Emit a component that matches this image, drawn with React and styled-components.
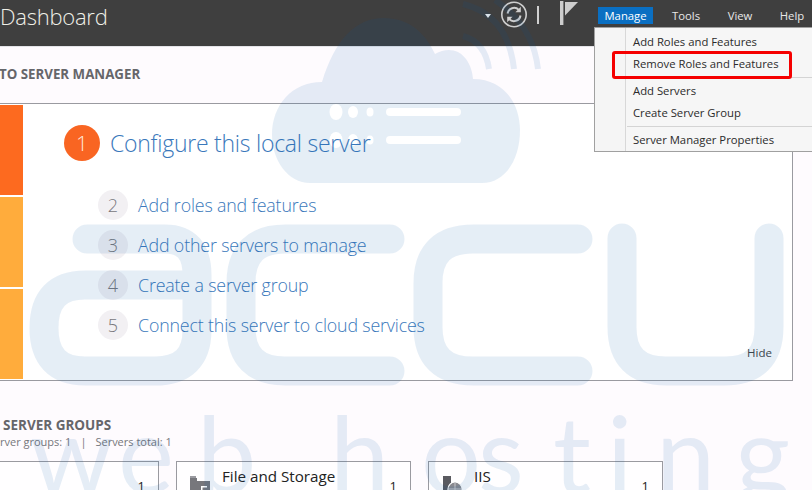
import React from "react";
import styled, { createGlobalStyle } from "styled-components";

const Global = createGlobalStyle`
  html, body { margin: 0; padding: 0; background: #fefbfe; }
  body { font-family: "Open Sans", "Noto Sans", sans-serif; }
`;

const Page = styled.div`
  position: relative;
  width: 812px;
  height: 490px;
  overflow: hidden;
  background: #fefbfe;
`;

const Header = styled.header`
  display: flex;
  align-items: flex-start;
  height: 46px;
  background: #3f3f3f;
  box-shadow: 0 1px 0 #e4e4e8;
`;

const Title = styled.h1`
  margin: -1px 0 0 0;
  flex: 1;
  font-size: 22px;
  line-height: 34px;
  font-weight: 300;
  color: #f0f0e8;
  letter-spacing: -0.25px;
`;

const Tools = styled.div`
  display: flex;
  align-items: flex-start;
  height: 30px;
`;

const Caret = styled.span`
  width: 0;
  height: 0;
  margin: 14px 0 0 0;
  border-left: 3.5px solid transparent;
  border-right: 3.5px solid transparent;
  border-top: 4px solid #f2f2f2;
`;

const RefreshIcon = styled.svg`
  display: block;
  width: 28px;
  height: 28px;
  margin-left: 9px;
`;

const Divider = styled.span`
  width: 2px;
  height: 18px;
  margin: 6px 0 0 9px;
  background: #d0d0d0;
`;

const FlagIcon = styled.svg`
  display: block;
  width: 18px;
  height: 26px;
  margin-left: 21px;
`;

const Nav = styled.nav`
  display: flex;
  align-items: flex-start;
  margin: 7px 0 0 20px;
  padding-right: 3px;
`;

const NavItem = styled.span`
  display: block;
  width: ${(p) => p.$w}px;
  height: 17px;
  margin-right: ${(p) => p.$gap || 0}px;
  font-size: 11.3px;
  line-height: 17px;
  text-align: center;
  color: ${(p) => (p.$active ? "#fff" : "#e8e8e8")};
  background: ${(p) => (p.$active ? "#0a6fc2" : "transparent")};
`;

const WelcomeHeading = styled.h2`
  margin: 0 0 0 -1px;
  height: 57px;
  font-size: 13.3px;
  line-height: 57px;
  font-weight: 700;
  color: #66666a;
  white-space: nowrap;
`;

const Panel = styled.section`
  display: flex;
  height: 276px;
  margin: 0 19px 0 -2px;
  border: 1px solid #9a9aa0;
  background: #fff;
`;

const Tiles = styled.div`
  display: flex;
  flex-direction: column;
  gap: 2px;
  width: 23px;
  padding: 1px 0 1px 1px;
`;

const Tile = styled.div`
  flex: 1;
  background: ${(p) => p.$color};
`;

const Steps = styled.div`
  position: relative;
  flex: 1;
  padding: 20px 0 0 41px;
`;

const LeadStep = styled.div`
  display: flex;
  align-items: center;
  gap: 10px;
  height: 38px;
  margin-bottom: 23px;
`;

const LeadBadge = styled.span`
  display: flex;
  align-items: center;
  justify-content: center;
  width: 36px;
  height: 36px;
  border-radius: 50%;
  background: #f96522;
  color: #ffe9dc;
  font-size: 21px;
  font-weight: 300;
`;

const LeadLabel = styled.span`
  font-size: 23px;
  font-weight: 300;
  color: #3a78bb;
  letter-spacing: -0.25px;
`;

const Step = styled.div`
  display: flex;
  align-items: center;
  gap: 10px;
  height: 40px;
  margin-left: 34px;
`;

const StepBadge = styled.span`
  display: flex;
  align-items: center;
  justify-content: center;
  width: 30px;
  height: 30px;
  border-radius: 50%;
  background: #f2f0f3;
  color: #77777c;
  font-size: 18px;
  font-weight: 300;
`;

const StepLabel = styled.span`
  font-size: 17.8px;
  font-weight: 300;
  color: #3a78bb;
  letter-spacing: -0.15px;
`;

const HideLink = styled.span`
  position: absolute;
  right: 20px;
  bottom: 19px;
  font-size: 11.5px;
  line-height: 16px;
  color: #444;
`;

const GroupsHeading = styled.h2`
  margin: 35px 0 0 3px;
  font-size: 13.5px;
  line-height: 18px;
  font-weight: 700;
  color: #66666a;
`;

const GroupsMeta = styled.p`
  display: flex;
  gap: 9px;
  margin: 0;
  font-size: 11px;
  line-height: 16px;
  color: #77777c;
  white-space: nowrap;
`;

const Cards = styled.div`
  display: flex;
  gap: 17px;
  margin: 11px 0 0 -76px;
`;

const Card = styled.article`
  display: flex;
  flex: none;
  width: 233px;
  height: 60px;
  border: 1px solid #9a9aa0;
  background: rgba(255, 255, 255, 0.75);
`;

const CardIcon = styled.svg`
  display: block;
  flex: none;
  width: 22px;
  height: 20px;
  margin: 13px 0 0 12px;
`;

const CardTitle = styled.span`
  flex: 1;
  padding: 3px 0 0 11px;
  font-size: 15.2px;
  line-height: 22px;
  color: #222;
`;

const CardCount = styled.span`
  padding: 14px 13px 0 0;
  font-size: 13px;
  line-height: 20px;
  color: #222;
`;

const Menu = styled.div`
  position: absolute;
  left: 594px;
  top: 27px;
  width: 218px;
  height: 120px;
  padding: 3px 0 0;
  border: 1px solid #a0a0a0;
  background: linear-gradient(to right, #f5f5f5 30px, #d8d8d8 30px, #d8d8d8 31px, #f6f6f6 31px);
`;

const MenuItem = styled.div`
  height: 22px;
  padding-left: 38px;
  font-size: 11.3px;
  line-height: 22px;
  color: #2b2b2b;
  white-space: nowrap;
`;

const MenuRule = styled.div`
  height: 1px;
  margin: 2px 0 2px 32px;
  background: #d4d4d4;
`;

const Highlight = styled.div`
  position: absolute;
  left: 17px;
  top: 23px;
  width: 174px;
  height: 22px;
  border: 3.5px solid #f50000;
  border-radius: 3px;
`;

const Watermark = styled.svg`
  position: absolute;
  inset: 0;
  width: 812px;
  height: 490px;
  pointer-events: none;
`;

const WatermarkWord = styled.text`
  font-family: "Lato", sans-serif;
  font-size: 106px;
  fill: rgba(0, 90, 170, 0.1);
`;

const WM = "rgba(0, 90, 170, 0.1)";

const menuGroups = [
  ["Add Roles and Features", "Remove Roles and Features"],
  ["Add Servers", "Create Server Group"],
  ["Server Manager Properties"],
];

const steps = [
  [2, "Add roles and features"],
  [3, "Add other servers to manage"],
  [4, "Create a server group"],
  [5, "Connect this server to cloud services"],
];

export default function App() {
  return (
    <Page>
      <Global />
      <Header>
        <Title>Dashboard</Title>
        <Tools>
          <Caret />
          <RefreshIcon viewBox="0 0 28 28">
            <circle cx="14" cy="14.5" r="12.2" fill="none" stroke="#cfcfcf" strokeWidth="1.6" />
            <path d="M7.5 13.5a6.6 6.6 0 0 1 11.3-3.6" fill="none" stroke="#cfcfcf" strokeWidth="2" />
            <path d="M20.8 6.8v5.4h-5.4z" fill="#cfcfcf" />
            <path d="M20.5 15.5a6.6 6.6 0 0 1-11.3 3.6" fill="none" stroke="#cfcfcf" strokeWidth="2" />
            <path d="M7.2 22.2v-5.4h5.4z" fill="#cfcfcf" />
          </RefreshIcon>
          <Divider />
          <FlagIcon viewBox="0 0 18 26">
            <rect x="0" y="1" width="3.4" height="24" fill="#cdcdcd" />
            <path d="M5 2h13L5 15.5z" fill="#cdcdcd" />
          </FlagIcon>
        </Tools>
        <Nav>
          <NavItem $w={55} $gap={11} $active>Manage</NavItem>
          <NavItem $w={44} $gap={11}>Tools</NavItem>
          <NavItem $w={42} $gap={14}>View</NavItem>
          <NavItem $w={34}>Help</NavItem>
        </Nav>
      </Header>
      <WelcomeHeading>TO SERVER MANAGER</WelcomeHeading>
      <Panel>
        <Tiles>
          <Tile $color="#fd6a1f" />
          <Tile $color="#ffac3c" />
          <Tile $color="#ffac3c" />
        </Tiles>
        <Steps>
          <LeadStep>
            <LeadBadge>1</LeadBadge>
            <LeadLabel>Configure this local server</LeadLabel>
          </LeadStep>
          {steps.map(([n, label]) => (
            <Step key={n}>
              <StepBadge>{n}</StepBadge>
              <StepLabel>{label}</StepLabel>
            </Step>
          ))}
          <HideLink>Hide</HideLink>
        </Steps>
      </Panel>
      <GroupsHeading>SERVER GROUPS</GroupsHeading>
      <GroupsMeta>
        <span>rver groups: 1</span>
        <span>|</span>
        <span>Servers total: 1</span>
      </GroupsMeta>
      <Cards>
        <Card>
          <CardTitle />
          <CardCount>1</CardCount>
        </Card>
        <Card>
          <CardIcon viewBox="0 0 22 20">
            <path d="M1 3h7v3h13v14H1z" fill="#77777c" />
            <path d="M1 1h6v2H1z" fill="#9a9aa0" />
            <path d="M12 11h6v9h-6z" fill="#fff" />
            <path d="M13.5 12.5h6v7h-6z" fill="#77777c" />
          </CardIcon>
          <CardTitle>File and Storage</CardTitle>
          <CardCount>1</CardCount>
        </Card>
        <Card>
          <CardIcon viewBox="0 0 22 20">
            <rect x="2" y="1" width="8" height="19" fill="#5a5a60" />
            <circle cx="14" cy="14" r="7" fill="#8a8a90" stroke="#fff" strokeWidth="1.2" />
            <path d="M14 7v14M7 14h14" stroke="#c8c8cc" strokeWidth="1" />
          </CardIcon>
          <CardTitle>IIS</CardTitle>
          <CardCount>1</CardCount>
        </Card>
      </Cards>
      <Watermark viewBox="0 0 812 490" aria-hidden="true">
        <defs>
          <mask id="cloud-holes">
            <rect width="812" height="490" fill="#fff" />
            <ellipse cx="336" cy="112" rx="6.5" ry="8" fill="#000" />
            <ellipse cx="353" cy="112" rx="5" ry="6" fill="#000" />
            <ellipse cx="370" cy="112" rx="3.5" ry="4.5" fill="#000" />
            <rect x="386" y="108" width="75" height="8" rx="4" fill="#000" />
            <ellipse cx="336" cy="140" rx="6.5" ry="8" fill="#000" />
            <ellipse cx="353" cy="140" rx="5" ry="6" fill="#000" />
            <ellipse cx="370" cy="140" rx="3.5" ry="4.5" fill="#000" />
            <rect x="386" y="136" width="75" height="8" rx="4" fill="#000" />
          </mask>
        </defs>
        <path
          mask="url(#cloud-holes)"
          fill={WM}
          d="M322 82C335 40 355 18 384 18C408 18 425 32 435 54C443 49 452 49 458 52C467 57 472 67 473 79C505 79 520 105 520 130C520 160 505 183 482 183H310C288 183 272 160 272 135C272 105 292 82 322 82Z"
        />
        <g fill="none" stroke={WM} strokeWidth="6">
          <path d="M463 36Q485 42 489 69" />
          <path d="M463 4Q508 15 514 69" />
          <path d="M495 0Q533 25 538 69" />
        </g>
        <g fill="none" stroke={WM} strokeWidth="29" strokeLinecap="round">
          <path d="M87 239H165Q197 239 197 275V330Q197 371 155 371H85Q44 371 44 328Q44 285 85 285H190" />
          <path d="M390 239H285Q241 239 241 283V327Q241 371 285 371H390" />
          <path d="M578 239H473Q428 239 428 283V327Q428 371 473 371H578" />
          <path d="M622 238V327Q622 371 666 371H725Q769 371 769 327V238" />
        </g>
        <WatermarkWord y="493" x="30 118 197 330 421 478 553 607 656 735">webhosting</WatermarkWord>
      </Watermark>
      <Menu>
        <Highlight />
        {menuGroups.map((group, i) => (
          <React.Fragment key={i}>
            {i > 0 && <MenuRule />}
            {group.map((item) => (
              <MenuItem key={item}>{item}</MenuItem>
            ))}
          </React.Fragment>
        ))}
      </Menu>
    </Page>
  );
}
